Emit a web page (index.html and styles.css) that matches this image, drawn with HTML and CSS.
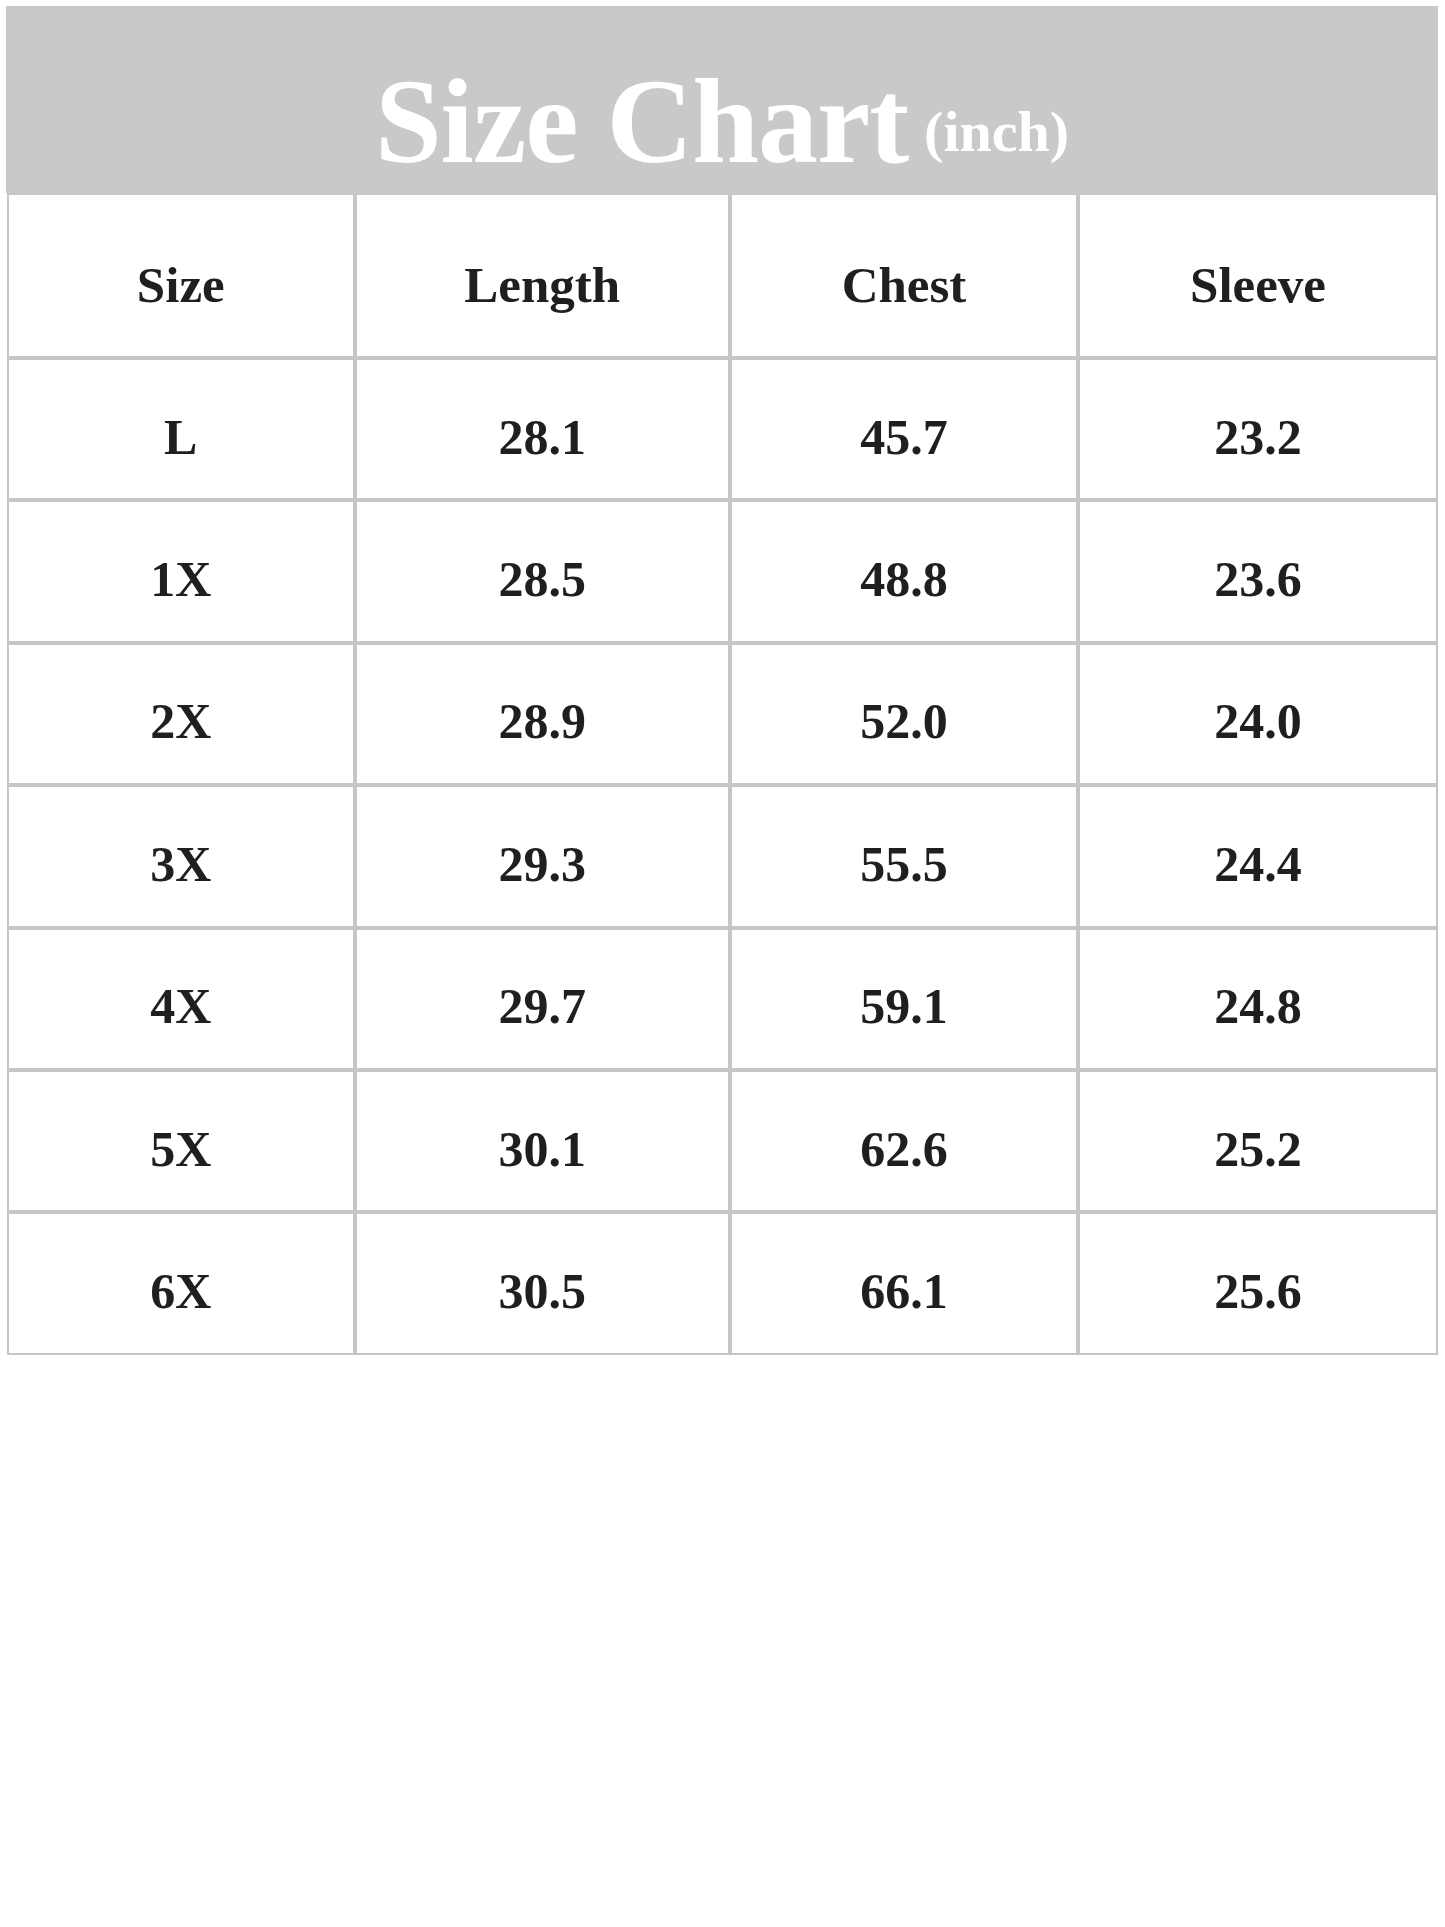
FILE: index.html
```html
<!DOCTYPE html>
<html lang="en">
<head>
<meta charset="utf-8">
<title>Size Chart</title>
<link rel="stylesheet" href="styles.css">
</head>
<body>
<div class="page">
  <div class="banner">
    <h1 class="title">Size Chart<span class="unit">(inch)</span></h1>
  </div>
  <div class="chart">
    <div class="cell head">Size</div>
    <div class="cell head">Length</div>
    <div class="cell head">Chest</div>
    <div class="cell head">Sleeve</div>

    <div class="cell">L</div><div class="cell">28.1</div><div class="cell">45.7</div><div class="cell">23.2</div>
    <div class="cell">1X</div><div class="cell">28.5</div><div class="cell">48.8</div><div class="cell">23.6</div>
    <div class="cell">2X</div><div class="cell">28.9</div><div class="cell">52.0</div><div class="cell">24.0</div>
    <div class="cell">3X</div><div class="cell">29.3</div><div class="cell">55.5</div><div class="cell">24.4</div>
    <div class="cell">4X</div><div class="cell">29.7</div><div class="cell">59.1</div><div class="cell">24.8</div>
    <div class="cell">5X</div><div class="cell">30.1</div><div class="cell">62.6</div><div class="cell">25.2</div>
    <div class="cell">6X</div><div class="cell">30.5</div><div class="cell">66.1</div><div class="cell">25.6</div>
  </div>
</div>
</body>
</html>
```

FILE: styles.css
```css
* {
  box-sizing: border-box;
}

html, body {
  margin: 0;
  padding: 0;
  background: #ffffff;
}

body {
  font-family: "Liberation Serif", "Times New Roman", serif;
  color: #1f1f1f;
}

.page {
  padding: 6px 0 0 0;
  width: 1445px;
}

.banner {
  margin-left: 6px;
  width: 1432px;
  height: 187px;
  background: #c9c9c9;
  padding-top: 56px;
  text-align: center;
}

.title {
  margin: 0;
  font-size: 120px;
  line-height: 120px;
  font-weight: 700;
  letter-spacing: -1px;
  color: #ffffff;
  white-space: nowrap;
}

.unit {
  font-size: 58px;
  letter-spacing: 0;
  margin-left: 16px;
  vertical-align: 11px;
}

.chart {
  margin-left: 7px;
  width: 1431px;
  display: grid;
  grid-template-columns: 347.5px 375.5px 348px 360px;
  grid-template-rows: 165px repeat(7, 142.4px);
}

.cell {
  border: 2px solid #c6c6c6;
  display: flex;
  align-items: center;
  justify-content: center;
  padding-top: 15px;
  font-size: 50px;
  font-weight: 700;
  line-height: 1;
}

.cell.head {
  padding-top: 20px;
  font-size: 51px;
}
```
